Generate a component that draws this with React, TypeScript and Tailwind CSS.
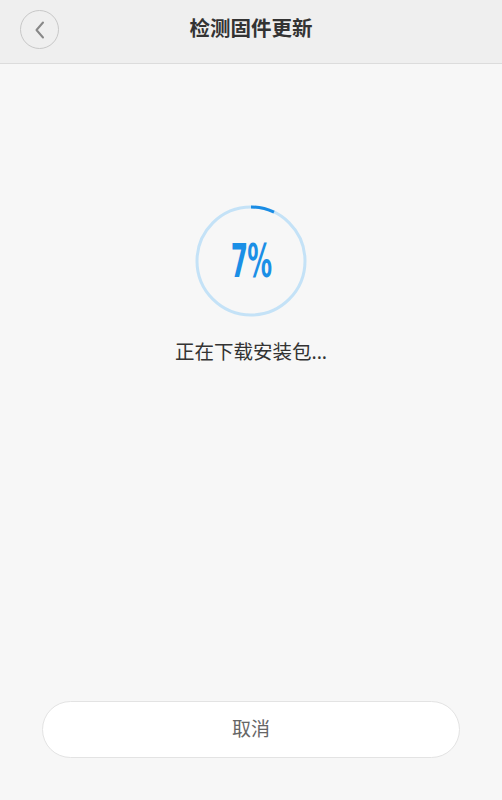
import React from "react";

export default function App() {
  const pct = 7;
  const r = 54;
  const c = 2 * Math.PI * r;
  return (
    <div
      className="w-[502px] h-[800px] bg-[#f7f7f7] flex flex-col"
      style={{ fontFamily: '"Noto Sans", "Noto Sans CJK SC", sans-serif' }}
    >
      <div className="h-[64px] bg-[#efefef] border-b border-[#dcdcdc] flex items-center relative shrink-0">
        <button className="absolute left-[20px] top-[10px] w-[39px] h-[39px] rounded-full border border-[#c8c8c8] flex items-center justify-center">
          <svg width="16" height="22" viewBox="0 0 16 22" fill="none">
            <path d="M11 3.5 L4.5 11 L11 18.5" stroke="#888" strokeWidth="2" strokeLinecap="round" strokeLinejoin="round" />
          </svg>
        </button>
        <div className="flex-1 text-center text-[20.5px] font-bold text-[#333] leading-none -mt-[6px]">检测固件更新</div>
      </div>
      <div className="flex-1 flex flex-col items-center">
        <div className="mt-[140px] relative w-[114px] h-[114px]">
          <svg width="114" height="114" viewBox="0 0 114 114" className="absolute inset-0">
            <circle cx="57" cy="57" r={r} fill="none" stroke="#c4e2f7" strokeWidth="3" />
            <circle
              cx="57"
              cy="57"
              r={r}
              fill="none"
              stroke="#1a8ce4"
              strokeWidth="3"
              strokeDasharray={`${(c * pct) / 100} ${c}`}
              transform="rotate(-90 57 57)"
            />
          </svg>
          <div className="absolute inset-0 flex items-center justify-center">
            <span
              className="inline-block text-[#1b8fe6] text-[46px] font-bold tracking-[-1px] leading-none scale-x-[0.6]"
              style={{ fontFamily: '"DejaVu Sans Condensed", "DejaVu Sans", sans-serif' }}
            >
              {pct}%
            </span>
          </div>
        </div>
        <div className="mt-[24px] text-[19.5px] text-[#333] leading-none">正在下载安装包...</div>
        <div className="flex-1" />
        <button className="mb-[42px] w-[418px] h-[57px] rounded-full bg-white border border-[#e3e3e3] text-[19px] text-[#666]">
          取消
        </button>
      </div>
    </div>
  );
}
